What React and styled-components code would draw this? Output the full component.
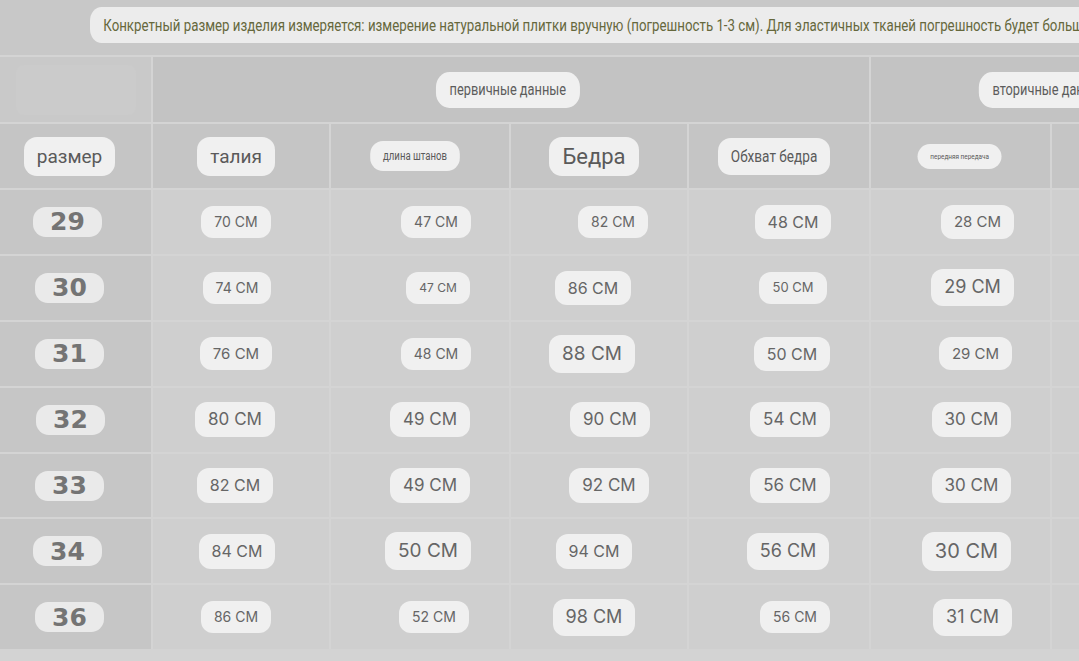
import styled, { createGlobalStyle } from 'styled-components';

const GlobalStyle = createGlobalStyle`
  html, body {
    margin: 0;
    padding: 0;
    background: #c8c8c8;
  }
  body {
    font-family: Inter, Roboto, sans-serif;
  }
`;

// no condensed face is installed, so narrow pills squeeze Roboto horizontally
const NARROW = 0.8;

const sizes = [
  { size: '29', shift: -8, cells: [[-5, 14], [16, 14], [14, 14], [14, 16], [17, 15]] },
  { size: '30', shift: -6, cells: [[-4, 14], [18, 12], [-6, 16], [14, 13], [12, 18]] },
  { size: '31', shift: -6, cells: [[-5, 15], [16, 14], [-7, 19], [13, 16], [15, 15]] },
  { size: '32', shift: -5, cells: [[-6, 17], [10, 17], [11, 17], [11, 17], [11, 17]] },
  { size: '33', shift: -6, cells: [[-6, 16], [10, 17], [10, 17], [11, 17], [11, 17]] },
  { size: '34', shift: -8, cells: [[-4, 16], [8, 19], [-5, 16], [9, 18], [6, 20]] },
  { size: '36', shift: -6, cells: [[-5, 14], [14, 14], [-5, 18], [16, 14], [12, 18]] },
];

const values = [
  ['70', '47', '82', '48', '28'],
  ['74', '47', '86', '50', '29'],
  ['76', '48', '88', '50', '29'],
  ['80', '49', '90', '54', '30'],
  ['82', '49', '92', '56', '30'],
  ['84', '50', '94', '56', '30'],
  ['86', '52', '98', '56', '31'],
];

const headers = [
  { label: 'талия', shift: -5, font: 19, narrow: false },
  { label: 'длина штанов', shift: -5, font: 12, narrow: true },
  { label: 'Бедра', shift: -5, font: 22, narrow: false },
  { label: 'Обхват бедра', shift: -5, font: 17, narrow: true },
  { label: 'передняя передача', shift: -1, font: 8, narrow: true },
];

export default function App() {
  return (
    <Page>
      <GlobalStyle />
      <NoticeBar>
        <NoticePill>
          Конкретный размер изделия измеряется: измерение натуральной плитки вручную (погрешность 1-3 см). Для эластичных тканей погрешность будет больше.
        </NoticePill>
      </NoticeBar>
      <Table>
        <GroupCorner>
          <CornerGlow />
        </GroupCorner>
        <GroupCell $span={4}>
          <GroupPill $shift={-3}>первичные данные</GroupPill>
        </GroupCell>
        <GroupCell $span={2}>
          <GroupPill>вторичные данные</GroupPill>
        </GroupCell>

        <HeadCell>
          <HeadPill $shift={-6} $font={19}>размер</HeadPill>
        </HeadCell>
        {headers.map((h) => (
          <HeadCell key={h.label}>
            <HeadPill $shift={h.shift} $font={h.font} $narrow={h.narrow}>
              {h.label}
            </HeadPill>
          </HeadCell>
        ))}
        <HeadCell />

        {sizes.map((row, i) => (
          <Row key={row.size} row={row} values={values[i]} />
        ))}
      </Table>
      <BottomStrip />
    </Page>
  );
}

function Row({ row, values }) {
  return (
    <>
      <SizeCell>
        <SizePill $shift={row.shift}>{row.size}</SizePill>
      </SizeCell>
      {row.cells.map(([shift, font], j) => (
        <DataCell key={j}>
          <ValuePill $shift={shift} $font={font}>
            {values[j]} CM
          </ValuePill>
        </DataCell>
      ))}
      <DataCell />
    </>
  );
}

const Page = styled.div`
  width: 1079px;
  height: 661px;
  overflow: hidden;
  background: #c8c8c8;
  display: flex;
  flex-direction: column;
`;

const NoticeBar = styled.div`
  height: 55px;
  padding: 7px 0 0 90px;
  box-sizing: border-box;
  white-space: nowrap;
`;

const NoticePill = styled.div`
  display: inline-flex;
  align-items: center;
  height: 36px;
  padding: 0 18px 0 16px;
  background: #ececec;
  border-radius: 14px 17px 17px 14px / 14px;
  font-family: Roboto, sans-serif;
  font-size: 16px;
  color: #66683c;
  transform: scaleX(0.83);
  transform-origin: left center;
`;

const Table = styled.div`
  display: grid;
  grid-template-columns: 151px 176px 178px 176px 180px 179px 177px;
  grid-template-rows: 65px 64px repeat(7, 63.9px);
  gap: 2px;
  padding-top: 2px;
  background: #d4d4d4;
  width: max-content;
`;

const Cell = styled.div`
  display: flex;
  align-items: center;
  justify-content: center;
  min-width: 0;
`;

const GroupCorner = styled(Cell)`
  background: #c9c9c9;
`;

const CornerGlow = styled.div`
  width: 120px;
  height: 50px;
  border-radius: 8px;
  background: #cbcbcb;
`;

const GroupCell = styled(Cell)`
  grid-column: span ${(p) => p.$span};
  background: #c3c3c3;
`;

const HeadCell = styled(Cell)`
  background: #c5c5c5;
`;

const SizeCell = styled(Cell)`
  background: #c6c6c6;
`;

const DataCell = styled(Cell)`
  background: #cfcfcf;
`;

const BottomStrip = styled.div`
  flex: 1;
  background: #d3d3d3;
`;

const Pill = styled.div`
  transform: translateX(${(p) => p.$shift || 0}px) scaleX(${(p) => (p.$narrow ? NARROW : 1)});
  background: #f0f0f0;
  white-space: nowrap;
  display: flex;
  align-items: center;
  justify-content: center;
`;

const GroupPill = styled(Pill).attrs({ $narrow: true })`
  height: 36px;
  padding: 0 17px;
  border-radius: 17px / 15px;
  font-family: Roboto, sans-serif;
  font-size: 16px;
  color: #5c5c5c;
`;

const HeadPill = styled(Pill)`
  height: ${(p) => (p.$font < 10 ? 25 : p.$font < 14 ? 30 : p.$font < 18 ? 37 : 39)}px;
  padding: 0 ${(p) => (p.$narrow ? 16 : 13)}px;
  border-radius: ${(p) => (p.$narrow ? '16px / 13px' : '13px')};
  font-family: Roboto, sans-serif;
  font-size: ${(p) => p.$font}px;
  color: #5a5a5a;
`;

const SizePill = styled(Pill)`
  height: 30px;
  padding: 0 17px;
  border-radius: 13px;
  font-family: 'DejaVu Sans', sans-serif;
  font-weight: bold;
  font-size: 25px;
  color: #747474;
  background: #eaeaea;
`;

const ValuePill = styled(Pill)`
  min-height: 32px;
  padding: 8px 13px;
  box-sizing: border-box;
  border-radius: 12px;
  font-size: ${(p) => p.$font}px;
  line-height: 1.15;
  color: #666;
`;
